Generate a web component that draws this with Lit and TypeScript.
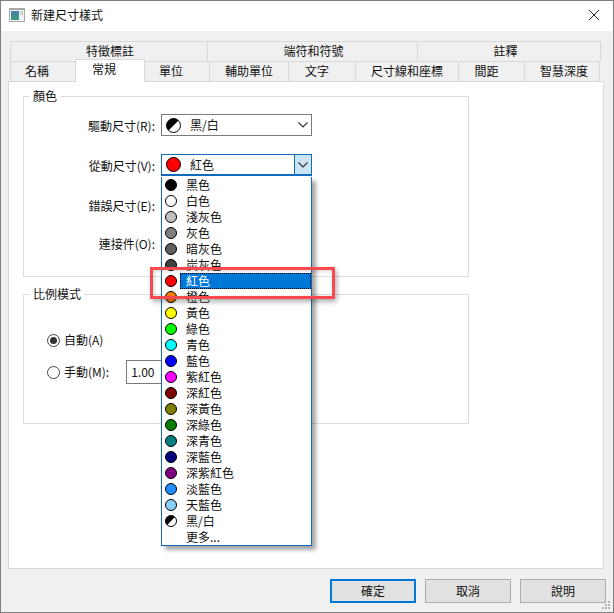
import { LitElement, html, css, svg } from "lit";
import { customElement } from "lit/decorators.js";

const TOP_TABS = [
  { t: "特徵標註", w: 197, s: 2 },
  { t: "端符和符號", w: 210, s: 2 },
  { t: "註釋", w: 184, s: -7 },
];
const SUB_TABS = [
  { t: "名稱", w: 65, s: -12 },
  { t: "常規", w: 70, s: -12, on: true },
  { t: "單位", w: 65, s: -12 },
  { t: "輔助單位", w: 79, s: 0 },
  { t: "文字", w: 67, s: -10 },
  { t: "尺寸線和座標", w: 103, s: 0 },
  { t: "間距", w: 66, s: -10 },
  { t: "智慧深度", w: 76, s: 4 },
];
const COLORS: [string, string][] = [
  ["黑色", "#000000"],
  ["白色", "#ffffff"],
  ["淺灰色", "#c0c0c0"],
  ["灰色", "#808080"],
  ["暗灰色", "#5f5f5f"],
  ["炭灰色", "#404040"],
  ["紅色", "#ff0000"],
  ["橙色", "#ff7f00"],
  ["黃色", "#ffff00"],
  ["綠色", "#00ff00"],
  ["青色", "#00ffff"],
  ["藍色", "#0000ff"],
  ["紫紅色", "#ff00ff"],
  ["深紅色", "#7f0000"],
  ["深黃色", "#7f7f00"],
  ["深綠色", "#007f00"],
  ["深青色", "#007f7f"],
  ["深藍色", "#00007f"],
  ["深紫紅色", "#7f007f"],
  ["淡藍色", "#1e90ff"],
  ["天藍色", "#87cefa"],
  ["黑/白", "half"],
  ["更多...", ""],
];

function dot(color: string, size: number) {
  const r = size / 2 - 0.5;
  const c = size / 2;
  return html`<svg class="dot" width=${size} height=${size} viewBox="0 0 ${size} ${size}">
    ${color === "half"
      ? svg`<circle cx=${c} cy=${c} r=${r} fill="#fff"/>
            <path d="M${c + r * 0.707} ${c - r * 0.707}A${r} ${r} 0 0 0 ${c - r * 0.707} ${c + r * 0.707}Z" fill="#000"/>
            <circle cx=${c} cy=${c} r=${r} fill="none" stroke="#000"/>`
      : svg`<circle cx=${c} cy=${c} r=${r} fill=${color} stroke="#000"/>`}
  </svg>`;
}

function shift(s: number) {
  return s < 0 ? `padding-right:${-s}px` : `padding-left:${s}px`;
}

@customElement("app-root")
export class AppRoot extends LitElement {
  static styles = css`
    :host {
      display: block;
      position: relative;
      width: 614px;
      height: 613px;
      box-sizing: border-box;
      border: 1px solid #7f7f7f;
      background: #f0f0f0;
      font: 12px/16px "Noto Sans CJK TC", "Noto Sans", sans-serif;
      color: #111;
      overflow: hidden;
    }
    .title {
      box-sizing: border-box;
      height: 30px;
      background: #fff;
      display: flex;
      align-items: center;
      padding: 0 14px 2px 8px;
      gap: 6px;
    }
    .title .cap { flex: 1; }
    .tabs { margin: 10px 0 0 9px; }
    .tabrow { display: flex; height: 20px; }
    .tab {
      box-sizing: border-box;
      border: 1px solid #d9d9d9;
      border-right: 0;
      border-bottom: 0;
      display: flex;
      align-items: center;
      justify-content: center;
      background: #f0f0f0;
      padding-bottom: 1px;
    }
    .tab:last-child { border-right: 1px solid #d9d9d9; }
    .tab.on {
      background: #fff;
      height: 23px;
      margin-top: -2px;
      padding-bottom: 4px;
      border: 1px solid #d9d9d9;
      border-bottom: 0;
      margin-right: -1px;
      position: relative;
      z-index: 1;
    }
    .panel {
      margin: 0 0 0 7px;
      width: 596px;
      height: 488px;
      box-sizing: border-box;
      background: #fff;
      border: 1px solid #d9d9d9;
      padding: 14px 0 0 14px;
    }
    .group {
      box-sizing: border-box;
      width: 446px;
      border: 1px solid #dcdcdc;
    }
    .group + .group { margin-top: 17px; }
    .legend {
      width: fit-content;
      margin: -9px 0 0 6px;
      padding: 0 3px;
      background: #fff;
    }
    .colors { height: 181px; }
    .rows {
      display: grid;
      grid-template-columns: 131px 151px;
      column-gap: 6px;
      row-gap: 18px;
      padding-top: 10px;
      align-items: center;
    }
    .lab { text-align: right; padding-top: 2px; }
    .lab.up { padding: 0 0 2px; }
    .combo {
      box-sizing: border-box;
      height: 22px;
      background: #fff;
      border: 1px solid #7a7a7a;
      display: flex;
      align-items: center;
      padding-left: 4px;
    }
    .combo .dot { margin-right: 9px; flex: none; }
    .combo .txt { flex: 1; }
    .combo .arrow {
      width: 17px;
      align-self: stretch;
      display: flex;
      align-items: center;
      justify-content: center;
    }
    .combo.open { border-color: #0f6cbd; border-bottom-width: 2px; }
    .combo.open .arrow {
      background: #cce4f7;
      border-left: 1px solid #0f6cbd;
      width: 16px;
    }
    .scale { height: 130px; }
    .radio-list {
      padding: 26px 0 0 23px;
      display: flex;
      flex-direction: column;
      gap: 8px;
    }
    .radio-row {
      display: flex;
      align-items: center;
      height: 24px;
      gap: 4px;
    }
    .radio-row .spin {
      box-sizing: border-box;
      width: 110px;
      height: 24px;
      margin-left: 13px;
      border: 1px solid #7a7a7a;
      padding: 0 4px;
      display: flex;
      align-items: center;
    }
    .radio { flex: none; }
    .footer {
      display: flex;
      justify-content: flex-end;
      gap: 9px;
      margin-top: 10px;
      padding-right: 7px;
    }
    .btn {
      box-sizing: border-box;
      width: 86px;
      height: 24px;
      background: #e1e1e1;
      border: 1px solid #adadad;
      display: flex;
      align-items: center;
      justify-content: center;
    }
    .btn.def { border: 2px solid #0078d7; }
    .grip { position: absolute; right: 2px; bottom: 2px; }
    .list {
      position: absolute;
      left: 160px;
      top: 176px;
      box-sizing: border-box;
      width: 151px;
      height: 369px;
      background: #fff;
      border: 1px solid #0f6cbd;
      border-top: 0;
      box-shadow: 4px 4px 4px rgba(0, 0, 0, 0.35);
      z-index: 2;
    }
    .item {
      height: 16px;
      display: flex;
      align-items: center;
      padding-left: 3px;
    }
    .item .swatch { width: 12px; height: 12px; flex: none; display: flex; }
    .item .name {
      margin-left: 3px;
      padding-left: 6px;
      flex: 1;
      height: 16px;
      box-sizing: border-box;
      display: flex;
      align-items: center;
    }
    .item.sel .name {
      background: #0078d7;
      color: #fff;
      outline: 1px dotted #000;
      outline-offset: -1px;
    }
    .mark {
      position: absolute;
      left: 149px;
      top: 266px;
      width: 185px;
      height: 32px;
      box-sizing: border-box;
      border: 3px solid #f8494f;
      box-shadow: 2px 3px 5px rgba(0, 0, 0, 0.3), inset 1px 1px 4px rgba(0, 0, 0, 0.18);
      z-index: 3;
    }
  `;

  private chevron() {
    return html`<svg width="10" height="6" viewBox="0 0 10 6"><path d="M.5.5 5 5 9.5.5" fill="none" stroke="#333" stroke-width="1.2"/></svg>`;
  }

  private combo(text: string, color: string, open = false) {
    return html`<div class="combo ${open ? "open" : ""}">
      ${color ? dot(color, 15) : ""}
      <span class="txt">${text}</span>
      <span class="arrow">${this.chevron()}</span>
    </div>`;
  }

  private radio(on: boolean) {
    return html`<svg class="radio" width="13" height="13" viewBox="0 0 13 13">
      <circle cx="6.5" cy="6.5" r="6" fill="#fff" stroke="#444"/>
      ${on ? svg`<circle cx="6.5" cy="6.5" r="3.5" fill="#333"/>` : ""}
    </svg>`;
  }

  render() {
    return html`
      <div class="title">
        <svg width="16" height="14" viewBox="0 0 16 14">
          <defs>
            <linearGradient id="g" x1="0" y1="0" x2="0" y2="1">
              <stop offset="0" stop-color="#4a7fb5"/>
              <stop offset="1" stop-color="#3f9a78"/>
            </linearGradient>
          </defs>
          <rect x=".5" y=".5" width="15" height="13" fill="#f2f2f2" stroke="#a8a8a8"/>
          <rect x="1" y="1" width="14" height="1" fill="#a8a8a8"/>
          <rect x="2" y="3" width="8" height="9" fill="url(#g)"/>
          <rect x="11" y="3" width="3" height="4" fill="#c8d8c8"/>
        </svg>
        <span class="cap">新建尺寸樣式</span>
        <svg width="10" height="10" viewBox="0 0 10 10"><path d="M0 0 10 10M10 0 0 10" stroke="#222" fill="none"/></svg>
      </div>
      <div class="tabs">
        <div class="tabrow">
          ${TOP_TABS.map(
            (t) => html`<div class="tab" style="width:${t.w}px;${shift(t.s)}">${t.t}</div>`
          )}
        </div>
        <div class="tabrow">
          ${SUB_TABS.map(
            (t) =>
              html`<div class="tab ${t.on ? "on" : ""}" style="width:${t.w}px;${t.s ? shift(t.s) : ""}">${t.t}</div>`
          )}
        </div>
      </div>
      <div class="panel">
        <div class="group colors">
          <div class="legend">顏色</div>
          <div class="rows">
            <div class="lab">驅動尺寸(R):</div>
            ${this.combo("黑/白", "half")}
            <div class="lab">從動尺寸(V):</div>
            ${this.combo("紅色", "#ff0000", true)}
            <div class="lab">錯誤尺寸(E):</div>
            ${this.combo("", "")}
            <div class="lab up">連接件(O):</div>
            ${this.combo("", "")}
          </div>
        </div>
        <div class="group scale">
          <div class="legend">比例模式</div>
          <div class="radio-list">
            <div class="radio-row">${this.radio(true)}<span>自動(A)</span></div>
            <div class="radio-row">
              ${this.radio(false)}<span>手動(M):</span>
              <div class="spin">1.00</div>
            </div>
          </div>
        </div>
      </div>
      <div class="footer">
        <div class="btn def">確定</div>
        <div class="btn">取消</div>
        <div class="btn">說明</div>
      </div>
      <svg class="grip" width="10" height="10" viewBox="0 0 10 10" fill="#b4b4b4">
        <rect x="7" y="1" width="2" height="2"/><rect x="4" y="4" width="2" height="2"/><rect x="7" y="4" width="2" height="2"/>
        <rect x="1" y="7" width="2" height="2"/><rect x="4" y="7" width="2" height="2"/><rect x="7" y="7" width="2" height="2"/>
      </svg>
      <div class="list">
        ${COLORS.map(
          ([n, c]) => html`<div class="item ${n === "紅色" ? "sel" : ""}">
            <span class="swatch">${c ? dot(c, 12) : ""}</span>
            <span class="name">${n}</span>
          </div>`
        )}
      </div>
      <div class="mark"></div>
    `;
  }
}
